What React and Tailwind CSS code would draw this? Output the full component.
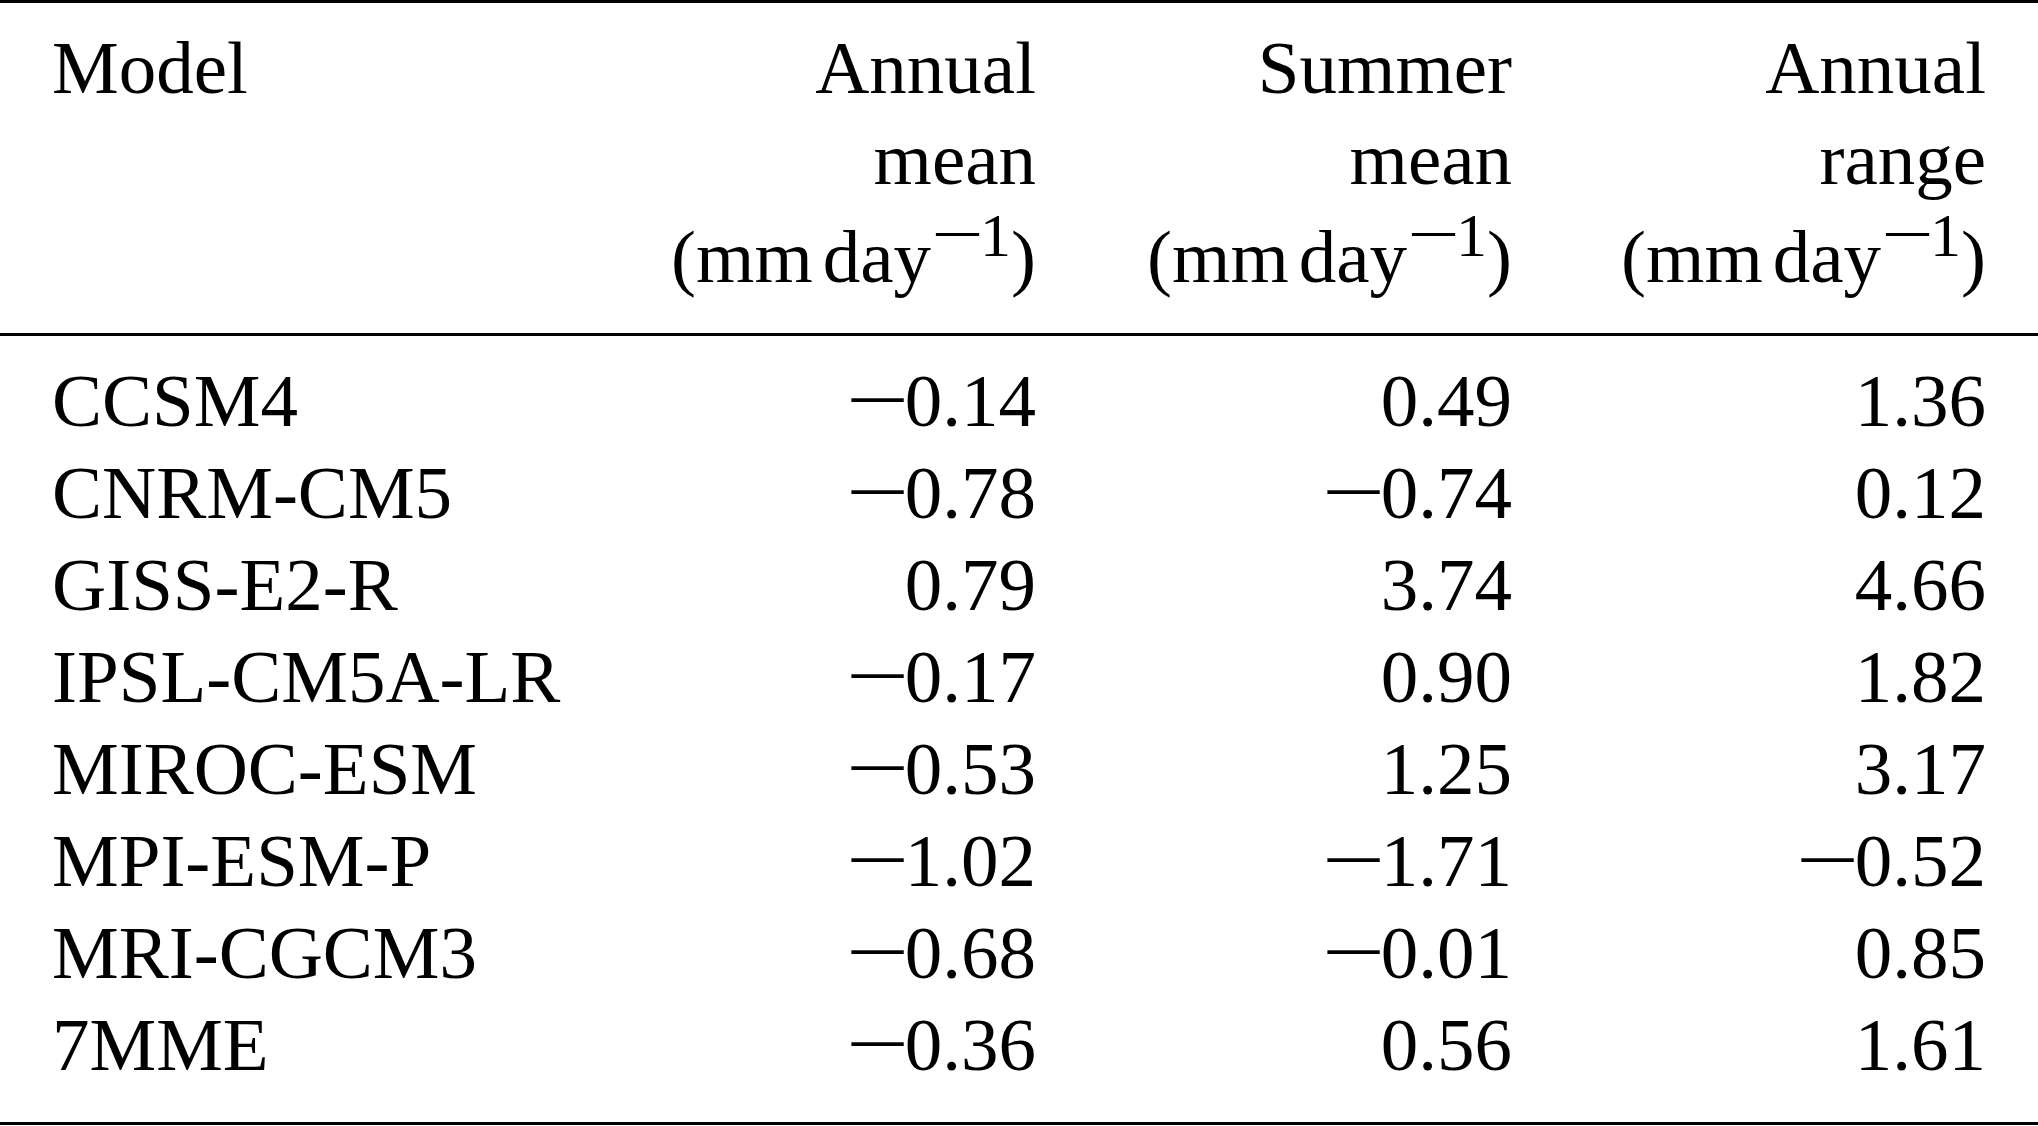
import React from 'react'

const rows = [
  ['CCSM4', '-0.14', '0.49', '1.36'],
  ['CNRM-CM5', '-0.78', '-0.74', '0.12'],
  ['GISS-E2-R', '0.79', '3.74', '4.66'],
  ['IPSL-CM5A-LR', '-0.17', '0.90', '1.82'],
  ['MIROC-ESM', '-0.53', '1.25', '3.17'],
  ['MPI-ESM-P', '-1.02', '-1.71', '-0.52'],
  ['MRI-CGCM3', '-0.68', '-0.01', '0.85'],
  ['7MME', '-0.36', '0.56', '1.61'],
]

const cols = 'grid grid-cols-[508px_476px_476px_474px] px-[52px]'

// math minus is wider than the text one
const Minus = ({ className }) => (
  <span className={'inline-block text-center ' + className}>
    <span className="inline-block scale-x-[1.5] relative -top-[1px]">−</span>
  </span>
)

const Num = ({ v }) =>
  v.startsWith('-') ? (
    <span className="whitespace-nowrap">
      <Minus className="w-[55px]" />
      {v.slice(1)}
    </span>
  ) : (
    <span>{v}</span>
  )

const Unit = () => (
  <span className="whitespace-nowrap">
    (mm<span className="ml-[10px]">day</span>
    <span className="text-[62px] leading-[0] align-[26px] ml-[3px]">
      <Minus className="w-[46px]" />1
    </span>)
  </span>
)

const App = () => {
  return (
    <div className="w-[2038px] h-[1126px] bg-white text-black font-['Liberation_Serif',serif] text-[75px]">
      <div className="h-[3px] bg-black" />

      {/* header */}
      <div className={cols + ' pt-[19px] pb-[31px] leading-[91px]'}>
        <div>Model</div>
        <div className="text-right">
          <div>Annual</div>
          <div>mean</div>
          <div className="pt-[7px]"><Unit /></div>
        </div>
        <div className="text-right">
          <div>Summer</div>
          <div>mean</div>
          <div className="pt-[7px]"><Unit /></div>
        </div>
        <div className="text-right">
          <div>Annual</div>
          <div>range</div>
          <div className="pt-[7px]"><Unit /></div>
        </div>
      </div>

      <div className="h-[3px] bg-black" />

      {/* body */}
      <div className="pt-[19px] pb-[31px] leading-[92px]">
        {rows.map((r) => (
          <div key={r[0]} className={cols}>
            <div className="whitespace-nowrap">{r[0]}</div>
            <div className="text-right"><Num v={r[1]} /></div>
            <div className="text-right"><Num v={r[2]} /></div>
            <div className="text-right"><Num v={r[3]} /></div>
          </div>
        ))}
      </div>

      <div className="h-[3px] bg-black" />
    </div>
  )
}

export default App
